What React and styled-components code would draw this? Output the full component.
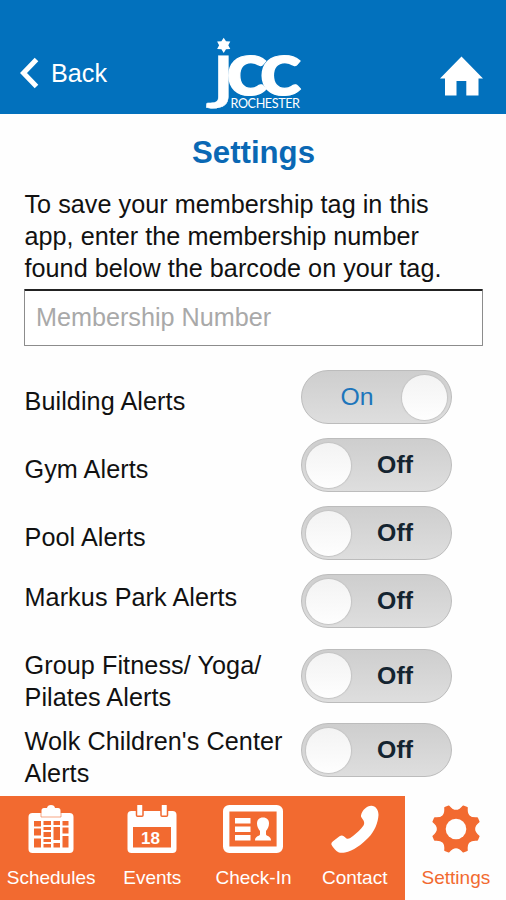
import React, { useState } from 'react';
import styled, { createGlobalStyle } from 'styled-components';

const GlobalStyle = createGlobalStyle`
    * {
        box-sizing: border-box;
    }

    body {
        margin: 0;
        background-color: #fff;
        font-family: 'Liberation Sans', Arial, sans-serif;
    }
`

const Screen = styled.div`
    display: flex;
    flex-direction: column;
    width: 506px;
    height: 900px;
    overflow: hidden;
    background-color: #fefefe;
`

const Header = styled.header`
    display: grid;
    grid-template-columns: 1fr 100px 1fr;
    flex: none;
    height: 114px;
    padding: 0 23px 0 20px;
    background-color: #0271bd;
`

const BackButton = styled.button`
    display: flex;
    align-items: center;
    align-self: start;
    gap: 12px;
    margin-top: 57px;
    padding: 0;
    border: none;
    background: none;
    color: #fff;
    font-family: inherit;
    font-size: 25.2px;
    line-height: 30px;
    cursor: pointer;
`

const HomeButton = styled.button`
    justify-self: end;
    align-self: start;
    margin-top: 56px;
    padding: 0;
    border: none;
    background: none;
    cursor: pointer;

    svg {
        display: block;
    }
`

const LogoSvg = styled.svg`
    display: block;
    margin-top: 30px;
    overflow: visible;
`

const LogoText = styled.text`
    font-family: Lato, sans-serif;
    font-size: ${props => props.$size}px;
    font-weight: ${props => props.$weight};
    fill: #fff;
`

const Content = styled.main`
    flex: 1;
    padding: 21px 23px 0 24px;
`

const Title = styled.h1`
    margin: 0;
    font-size: 31.2px;
    font-weight: 700;
    line-height: 36px;
    text-align: center;
    color: #0a68b4;
`

const Intro = styled.p`
    width: 430px;
    margin: 17px 0 0;
    padding-left: 0.5px;
    font-size: 25.2px;
    line-height: 32px;
    letter-spacing: 0.03px;
    color: #111;
`

const NumberInput = styled.input`
    display: block;
    width: 459px;
    height: 57px;
    margin-top: 5px;
    padding: 0 11px 2px;
    border: 1px solid #8c8c8c;
    border-top: 2px solid #222;
    border-radius: 1px;
    outline: none;
    background-color: #fff;
    font-family: inherit;
    font-size: 25.2px;

    &::placeholder {
        color: #a9a9a9;
        opacity: 1;
    }
`

const AlertList = styled.div`
    margin-top: 24px;
`

const AlertRow = styled.div`
    display: flex;
    align-items: flex-start;
    height: ${props => props.$height}px;
`

const AlertLabel = styled.span`
    width: 277px;
    padding: ${props => props.$offset}px 0 0 0.5px;
    font-size: 25.2px;
    line-height: 32px;
    letter-spacing: 0.08px;
    color: #111;
`

const Switch = styled.button`
    display: flex;
    flex-direction: ${props => props.$on ? 'row-reverse' : 'row'};
    align-items: center;
    width: 151px;
    height: 54px;
    padding: 0 4px;
    border: 1.5px solid #bcbcbc;
    border-radius: 27px;
    background: linear-gradient(#cecece, #dedede);
    font-family: inherit;
    cursor: pointer;
`

const Knob = styled.span`
    flex: none;
    width: 45px;
    height: 45px;
    border-radius: 50%;
    background: linear-gradient(#f3f3f3, #fefefe);
    box-shadow: 0 0 1px 1px #c4c4c4;
`

const SwitchText = styled.span`
    flex: 1;
    padding-left: ${props => props.$on ? 6 : 0}px;
    padding-right: ${props => props.$on ? 0 : 8}px;
    font-size: 24.8px;
    line-height: 30px;
    font-weight: ${props => props.$on ? 400 : 700};
    text-align: center;
    color: ${props => props.$on ? '#1d75bb' : '#142430'};
`

const TabBar = styled.nav`
    display: grid;
    grid-template-columns: repeat(5, 1fr);
    flex: none;
    height: 104px;
    background-color: #f26a30;
`

const Tab = styled.button`
    display: flex;
    flex-direction: column;
    align-items: center;
    padding: 9px 0 0 1px;
    border: none;
    background-color: ${props => props.$active ? '#fefefe' : '#f26a30'};
    color: ${props => props.$active ? '#f26a30' : '#fff'};
    font-family: inherit;
    font-size: 19px;
    line-height: 22px;
    cursor: pointer;

    svg {
        display: block;
        margin-bottom: 14px;
    }
`

const starPoints = Array.from({ length: 12 }, (_, i) => {
    const r = i % 2 ? 4.6 : 7.6;
    const a = (i * 30 - 90) * Math.PI / 180;
    return `${21.7 + r * Math.cos(a)},${15.3 + r * Math.sin(a)}`;
}).join(' ');

function Logo() {
    return (
        <LogoSvg width="100" height="84" viewBox="0 0 100 84">
            <defs>
                <clipPath id="stem">
                    <rect x="-10" y="25.5" width="50" height="60" />
                </clipPath>
            </defs>
            <polygon points={starPoints} fill="#fff" />
            <g clipPath="url(#stem)">
                <LogoText transform="translate(8.2 64) scale(1.4 1)" $size={78} $weight={400} stroke="#fff" strokeWidth="0.4">j</LogoText>
            </g>
            <g stroke="#fff" strokeWidth="1.2">
                <LogoText transform="translate(24 64.7) scale(1.13 1)" $size={76} $weight={700}>c</LogoText>
                <LogoText transform="translate(57.3 64.7) scale(1.16 1)" $size={76} $weight={700}>c</LogoText>
            </g>
            <LogoText x="28.5" y="78" $size={12.6} $weight={400} textLength="69.5">ROCHESTER</LogoText>
        </LogoSvg>
    );
}

function ScheduleIcon() {
    return (
        <svg width="46" height="48" viewBox="0 0 46 48">
            <rect x="0.5" y="8" width="45" height="40" rx="4" fill="#fff" />
            <path d="M13.5 12V5.5Q13.5 3 16 3H19Q19.5 0 23 0T27 3H30Q32.5 3 32.5 5.5V12Z" fill="#fff" />
            <path d="M13 8V12H33V8" stroke="#f26a30" strokeWidth="0.6" fill="none" />
            <g fill="#f26a30">
                <path d="M6 16h7v5.5h-7zM6 23.5h7v7h-7zM6 33.5h7v9h-7z" />
                <path d="M15.5 16h7.5v4h-7.5zM15.5 22h7.5v3h-7.5zM15.5 27h7.5v5h-7.5zM15.5 34h7.5v3h-7.5zM15.5 39h7.5v3.5h-7.5z" />
                <path d="M25.5 16h6.5v4h-6.5zM25.5 22h6.5v13h-6.5zM25.5 38h6.5v4.5h-6.5z" />
                <path d="M34.5 16h6v4.5h-6zM34.5 22.5h6v6h-6zM34.5 31h6v11.5h-6z" />
            </g>
        </svg>
    );
}

function EventsIcon() {
    return (
        <svg width="50" height="48" viewBox="0 0 50 48">
            <rect x="0.5" y="6" width="49" height="42" rx="4" fill="#fff" />
            <g fill="#fff" stroke="#f26a30" strokeWidth="1.5">
                <rect x="9.5" y="-0.7" width="6.5" height="12" rx="1" />
                <rect x="34" y="-0.7" width="6.5" height="12" rx="1" />
            </g>
            <rect x="6" y="22" width="38" height="20.5" fill="#f26a30" />
            <text x="23.5" y="39" fontSize="17" fontWeight="700" textAnchor="middle" fill="#fff">18</text>
        </svg>
    );
}

function CheckInIcon() {
    return (
        <svg width="60" height="48" viewBox="0 0 60 48" fill="#fff">
            <rect x="3.2" y="3.2" width="53.6" height="41.6" rx="3" fill="none" stroke="#fff" strokeWidth="6.4" />
            <path d="M12 13h15.5v5.5h-15.5zM12 21.5h15.5v5.5h-15.5zM12 30h15.5v5.5h-15.5z" />
            <path d="M40 12.5c-4 0-6 2.5-6 6 0 3 1.5 5.5 3 7.5v3.5c-1 2-5 1.5-5 6h16c0-4.5-4-4-5-6v-3.5c1.5-2 3-4.5 3-7.5 0-3.5-2-6-6-6z" />
        </svg>
    );
}

function PhoneIcon() {
    return (
        <svg width="48" height="48" viewBox="0 0 48 48" fill="#fff">
            <path d="M30 10.5C31 5 36 .5 40.5.7 44.5 1 47.5 4.5 47.5 10 47 18 43.5 26.5 37.5 32.5 31 39.5 22 46 14 47.5 10.5 48.2 7.5 47.8 5.5 46 3 43.5 1.2 41.5.4 39.5.2 38 .8 37.2 2 36.2L8.5 31.2C10 30.2 11.5 30.2 12.8 31.2L15.5 33.5C17.5 34.5 19.5 33 22 31 26 28 30 24 32.5 20.5 33.5 18.5 33.3 17 32.5 15.5L30.5 12.5Q29.8 11.5 30 10.5Z" />
        </svg>
    );
}

const gearPoint = (r, deg) => {
    const a = deg * Math.PI / 180;
    return `${(24 + r * Math.cos(a)).toFixed(2)} ${(24 + r * Math.sin(a)).toFixed(2)}`;
};

// eight rounded teeth with a scooped valley between each pair
const gearPath = Array.from({ length: 8 }, (_, i) => {
    const mid = 22.5 + i * 45;
    return `${i ? 'L' : 'M'}${gearPoint(24, mid - 5)} L${gearPoint(24, mid + 5)} Q${gearPoint(14, mid + 22.5)} ${gearPoint(24, mid + 40)}`;
}).join(' ') + 'Z';

function GearIcon() {
    return (
        <svg width="50" height="48" viewBox="-1 0 50 48">
            <path d={gearPath} fill="#f26a30" stroke="#f26a30" strokeWidth="1.4" strokeLinejoin="round" />
            <circle cx="24" cy="24" r="10.3" fill="#fefefe" />
        </svg>
    );
}

const initialAlerts = [
    { name: 'Building Alerts', on: true, height: 68, offset: 14.5 },
    { name: 'Gym Alerts', on: false, height: 68, offset: 14.5 },
    { name: 'Pool Alerts', on: false, height: 68, offset: 14.5 },
    { name: 'Markus Park Alerts', on: false, height: 74.5, offset: 7 },
    { name: 'Group Fitness/ Yoga/ Pilates Alerts', on: false, height: 74.5, offset: 0 },
    { name: "Wolk Children's Center Alerts", on: false, height: 73, offset: 2 },
];

const tabs = [
    { name: 'Schedules', icon: ScheduleIcon },
    { name: 'Events', icon: EventsIcon },
    { name: 'Check-In', icon: CheckInIcon },
    { name: 'Contact', icon: PhoneIcon },
    { name: 'Settings', icon: GearIcon },
];

function App() {

    const [alerts, setAlerts] = useState(initialAlerts);
    const [number, setNumber] = useState('');

    const toggle = name => setAlerts(alerts.map(a => a.name === name ? { ...a, on: !a.on } : a));

    return (
        <Screen>
            <GlobalStyle />
            <Header>
                <BackButton>
                    <svg width="19" height="32" viewBox="0 0 19 32">
                        <path d="M16.5 2.5L3.5 16L16.5 29.5" fill="none" stroke="#fff" strokeWidth="5" />
                    </svg>
                    Back
                </BackButton>
                <Logo />
                <HomeButton>
                    <svg width="43" height="40" viewBox="0 0 43 40">
                        <path d="M21.5 .5L43 22.5H38.5V39.5H26.3V25H16.5V39.5H5V22.5H0Z" fill="#fff" />
                    </svg>
                </HomeButton>
            </Header>
            <Content>
                <Title>Settings</Title>
                <Intro>To save your membership tag in this app, enter the membership number found below the barcode on your tag.</Intro>
                <NumberInput placeholder="Membership Number" value={number} onChange={evt => setNumber(evt.target.value)} />
                <AlertList>
                    {alerts.map(alert => (
                        <AlertRow key={alert.name} $height={alert.height}>
                            <AlertLabel $offset={alert.offset}>{alert.name}</AlertLabel>
                            <Switch $on={alert.on} onClick={() => toggle(alert.name)}>
                                <Knob />
                                <SwitchText $on={alert.on}>{alert.on ? 'On' : 'Off'}</SwitchText>
                            </Switch>
                        </AlertRow>
                    ))}
                </AlertList>
            </Content>
            <TabBar>
                {tabs.map(({ name, icon: Icon }) => (
                    <Tab key={name} $active={name === 'Settings'}>
                        <Icon />
                        {name}
                    </Tab>
                ))}
            </TabBar>
        </Screen>
    );
}

export default App;
